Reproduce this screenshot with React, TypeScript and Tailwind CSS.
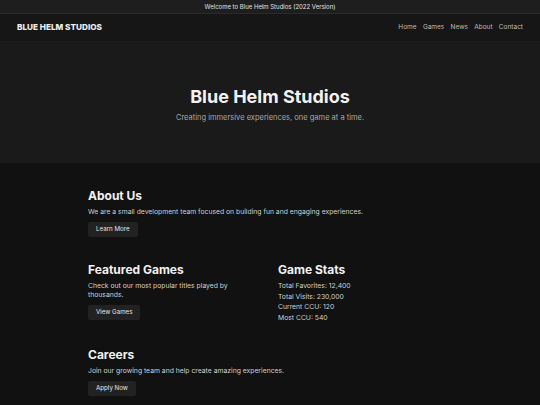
import React from 'react';

const navLinks = ['Home', 'Games', 'News', 'About', 'Contact'];

const stats = [
  'Total Favorites: 12,400',
  'Total Visits: 230,000',
  'Current CCU: 120',
  'Most CCU: 540',
];

const Button: React.FC<{ label: string }> = ({ label }) => (
  <button className="block bg-[#222222] text-[#e5e5e5] text-[6.2px] px-[8px] h-[15px] rounded-[2px] leading-none">
    {label}
  </button>
);

const App: React.FC = () => {
  return (
    <div className="min-h-[405px] bg-[#111111] text-white font-['Inter',sans-serif] antialiased">
      {/* Top banner */}
      <div className="h-[14px] bg-[#1e1e1e] border-b border-[#2a2a2a] flex items-center justify-center text-[6px] text-[#e0e0e0] leading-none">
        Welcome to Blue Helm Studios (2022 Version)
      </div>

      {/* Nav */}
      <nav className="h-[28px] bg-[#161616] border-b border-[#1c1c1c] flex items-center justify-between px-[17px] leading-none">
        <div className="font-extrabold text-[8.2px] text-[#eeeeee]">BLUE HELM STUDIOS</div>
        <div className="flex gap-[6.3px] text-[6.5px] text-[#bdbdbd]">
          {navLinks.map(l => (
            <span key={l}>{l}</span>
          ))}
        </div>
      </nav>

      {/* Hero */}
      <section className="h-[121px] bg-[#1a1a1a] flex flex-col items-center justify-center">
        <h1 className="text-[18px] font-bold text-[#f2f2f2] leading-none mt-[5px]">Blue Helm Studios</h1>
        <p className="text-[7.5px] text-[#a8a8a8] mt-[7px] leading-[10px]">Creating immersive experiences, one game at a time.</p>
      </section>

      {/* Main */}
      <main className="w-[364px] ml-[88px] pt-[27px] pb-[10px]">
        <section>
          <h2 className="text-[12px] font-bold leading-none text-[#f2f2f2]">About Us</h2>
          <p className="text-[6.8px] text-[#cfcfcf] mt-[5px] leading-[10px]">
            We are a small development team focused on building fun and engaging experiences.
          </p>
          <div className="mt-[5px]">
            <Button label="Learn More" />
          </div>
        </section>

        <div className="grid grid-cols-2 gap-[16px] mt-[27px]">
          <section>
            <h2 className="text-[12px] font-bold leading-none text-[#f2f2f2]">Featured Games</h2>
            <p className="text-[6.8px] text-[#cfcfcf] mt-[6px] leading-[8.5px] w-[150px]">
              Check out our most popular titles played by thousands.
            </p>
            <div className="mt-[6px]">
              <Button label="View Games" />
            </div>
          </section>
          <section>
            <h2 className="text-[12px] font-bold leading-none text-[#f2f2f2]">Game Stats</h2>
            <div className="mt-[5px] flex flex-col">
              {stats.map(s => (
                <p key={s} className="text-[6.8px] text-[#cfcfcf] leading-[10.5px]">{s}</p>
              ))}
            </div>
          </section>
        </div>

        <section className="mt-[26px]">
          <h2 className="text-[12px] font-bold leading-none text-[#f2f2f2]">Careers</h2>
          <p className="text-[6.8px] text-[#cfcfcf] mt-[5px] leading-[10px]">
            Join our growing team and help create amazing experiences.
          </p>
          <div className="mt-[5px]">
            <Button label="Apply Now" />
          </div>
        </section>
      </main>
    </div>
  );
};

export default App;
